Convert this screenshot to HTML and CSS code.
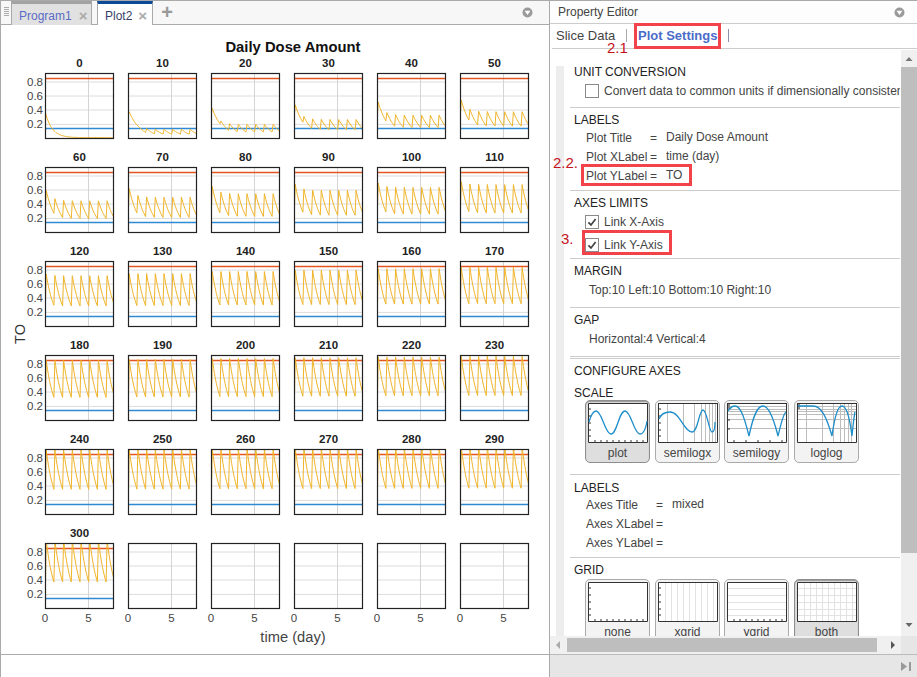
FILE: index.html
```html
<!DOCTYPE html>
<html lang="en">
<head>
<meta charset="utf-8">
<title>Plot settings</title>
<link rel="stylesheet" href="styles.css">
</head>
<body>
<div class="app">
  <main class="left">
    <div class="tabbar">
      <div class="grip"></div>
      <div class="tab tab-off"><span class="tab-name">Program1</span><span class="tab-x">×</span></div>
      <div class="tab tab-on"><span class="tab-name">Plot2</span><span class="tab-x">×</span></div>
      <div class="tab-add">+</div>
      <svg class="collapse collapse-left" viewBox="0 0 11 11"><circle cx="5.5" cy="5.5" r="5" fill="#9a9a9a"/><path d="M2.6 3.8h5.8L5.5 8z" fill="#fff"/></svg>
    </div>
    <div class="figure">
      <div class="fig-title">Daily Dose Amount</div>
      <div class="fig-body">
        <div class="ylabel"><span>TO</span></div>
        <div class="plots" id="plots"></div>
      </div>
      <div class="xlabel">time (day)</div>
    </div>
    <div class="statusbar"></div>
  </main>

  <aside class="right">
    <header class="prop-head">
      <span>Property Editor</span>
      <svg class="collapse" viewBox="0 0 11 11"><circle cx="5.5" cy="5.5" r="5" fill="#9a9a9a"/><path d="M2.6 3.8h5.8L5.5 8z" fill="#fff"/></svg>
    </header>
    <nav class="prop-tabs">
      <span class="pt pt-slice">Slice Data</span>
      <span class="pt-div pt-div1"></span>
      <span class="pt pt-active">Plot Settings</span>
      <span class="pt-div pt-div2"></span>
    </nav>

    <div class="scroller">
      <div class="viewport">
        <div class="strip"></div>
        <div class="content">
          <section class="sec sec-first">
            <h3>UNIT CONVERSION</h3>
            <div class="check-row"><span class="cb"></span><span class="nowrap">Convert data to common units if dimensionally consistent</span></div>
          </section>
          <section class="sec sec-kv">
            <h3>LABELS</h3>
            <div class="kv"><span class="k">Plot Title</span><span class="eq">=</span><span class="v">Daily Dose Amount</span></div>
            <div class="kv"><span class="k">Plot XLabel</span><span class="eq">=</span><span class="v">time (day)</span></div>
            <div class="kv"><span class="k">Plot YLabel</span><span class="eq">=</span><span class="v">TO</span></div>
          </section>
          <section class="sec">
            <h3>AXES LIMITS</h3>
            <div class="check-row"><span class="cb"><svg viewBox="0 0 14 14"><path d="M2.8 7.4l3 3 5.4-7" fill="none" stroke="#444" stroke-width="2"/></svg></span><span>Link X-Axis</span></div>
            <div class="check-row check-row2"><span class="cb"><svg viewBox="0 0 14 14"><path d="M2.8 7.4l3 3 5.4-7" fill="none" stroke="#444" stroke-width="2"/></svg></span><span>Link Y-Axis</span></div>
          </section>
          <section class="sec sec-text">
            <h3>MARGIN</h3>
            <div class="text-row">Top:10 Left:10 Bottom:10 Right:10</div>
          </section>
          <section class="sec sec-text">
            <h3>GAP</h3>
            <div class="text-row">Horizontal:4 Vertical:4</div>
          </section>
          <section class="sec sec-double">
            <h3>CONFIGURE AXES</h3>
            <h3 class="h-scale">SCALE</h3>
            <div class="icons icons-scale">
              <div class="ibtn ibtn-on">
                <svg viewBox="0 0 60 40"><g class="tk"><path d="M1 6h2M1 13h2M1 20h2M1 27h2M1 33h2M7 39v-2M13 39v-2M19 39v-2M25 39v-2M31 39v-2M37 39v-2M43 39v-2M49 39v-2M55 39v-2"/></g><path class="frame" d="M.5.5h59v39H.5z"/><path class="cv" d="M1 19C3 12 5 8 8 8c6 0 9 23 15 23 6 0 8-23 14-23s9 23 15 23c4 0 6-6 7-13"/></svg>
                <span>plot</span>
              </div>
              <div class="ibtn">
                <svg viewBox="0 0 60 40"><g class="gl"><path d="M9.500 0v40M25.500 0v40M36.500 0v40M43.500 0v40M47.500 0v40M51.500 0v40M54.500 0v40M57.500 0v40"/></g><g class="tk"><path d="M1 6h2M1 13h2M1 20h2M1 27h2M1 33h2"/></g><path class="frame" d="M.5 0v39.5h59V0M0 .5h60"/><path class="cv" d="M1 16C3 11 7 9 12 9c10 0 14 20 22 20 6 0 7-22 11-22 4 0 6 22 9 22 2 0 3-5 3-10"/></svg>
                <span>semilogx</span>
              </div>
              <div class="ibtn">
                <svg viewBox="0 0 60 40"><g class="gl"><path d="M0 3.500h60M0 6.500h60M0 8.500h60M0 11.500h60M0 16.500h60M0 25.500h60"/></g><rect x="0" y="0" width="3" height="6" fill="#888"/><g class="tk"><path d="M1 17h2M1 26h2M7 39v-2M19 39v-2M31 39v-2M43 39v-2M55 39v-2"/></g><path class="frame" d="M.5 0v39.5h59V0M0 .5h60"/><path class="cv" d="M1 8C3 5 5 3 8 3c6 0 10 14 14 30C26 14 30 3 36 3s11 14 15 30c3-12 5-22 8-24"/></svg>
                <span>semilogy</span>
              </div>
              <div class="ibtn">
                <svg viewBox="0 0 60 40"><g class="gl"><path d="M0 3.500h60M0 6.500h60M0 8.500h60M0 11.500h60M0 16.500h60M0 25.500h60M9.500 0v40M25.500 0v40M36.500 0v40M43.500 0v40M47.500 0v40M51.500 0v40M54.500 0v40"/></g><rect x="0" y="0" width="3" height="6" fill="#888"/><path class="frame" d="M.5 0v39.5h59V0M0 .5h60"/><path class="cv" d="M1 3h15C25 3 30 16 35 33 37 18 40 3 45 3c5 0 8 14 10 30 1-10 2-20 3-24"/></svg>
                <span>loglog</span>
              </div>
            </div>
          </section>
          <section class="sec sec-axes">
            <h3>LABELS</h3>
            <div class="kv kv-axes"><span class="k">Axes Title</span><span class="eq">=</span><span class="v">mixed</span></div>
            <div class="kv kv-axes"><span class="k">Axes XLabel</span><span class="eq">=</span></div>
            <div class="kv kv-axes"><span class="k">Axes YLabel</span><span class="eq">=</span></div>
          </section>
          <section class="sec">
            <h3>GRID</h3>
            <div class="icons icons-grid">
              <div class="ibtn">
                <svg viewBox="0 0 60 40"><g class="tk"><path d="M1 6h2M1 13h2M1 20h2M1 27h2M1 33h2M7 39v-2M13 39v-2M19 39v-2M25 39v-2M31 39v-2M37 39v-2M43 39v-2M49 39v-2M55 39v-2"/></g><path class="frame" d="M.5.5h59v39H.5z"/></svg>
                <span>none</span>
              </div>
              <div class="ibtn">
                <svg viewBox="0 0 60 40"><g class="gl2"><path d="M7.500 0v40M13.500 0v40M19.500 0v40M25.500 0v40M31.500 0v40M37.500 0v40M43.500 0v40M49.500 0v40M55.500 0v40"/></g><g class="tk"><path d="M1 6h2M1 13h2M1 20h2M1 27h2M1 33h2"/></g><path class="frame" d="M.5.5h59v39H.5z"/></svg>
                <span>xgrid</span>
              </div>
              <div class="ibtn">
                <svg viewBox="0 0 60 40"><g class="gl2"><path d="M0 6.500h60M0 13.500h60M0 20.500h60M0 27.500h60M0 33.500h60"/></g><g class="tk"><path d="M7 39v-2M13 39v-2M19 39v-2M25 39v-2M31 39v-2M37 39v-2M43 39v-2M49 39v-2M55 39v-2"/></g><path class="frame" d="M.5.5h59v39H.5z"/></svg>
                <span>ygrid</span>
              </div>
              <div class="ibtn ibtn-on">
                <svg viewBox="0 0 60 40"><g class="gl2"><path d="M7.500 0v40M13.500 0v40M19.500 0v40M25.500 0v40M31.500 0v40M37.500 0v40M43.500 0v40M49.500 0v40M55.500 0v40M0 6.500h60M0 13.500h60M0 20.500h60M0 27.500h60M0 33.500h60"/></g><path class="frame" d="M.5.5h59v39H.5z"/></svg>
                <span>both</span>
              </div>
            </div>
          </section>
        </div>
      </div>
      <div class="vbar">
        <svg class="arrow" viewBox="0 0 16 17"><path d="M4.500 11l3.500-4 3.500 4z" fill="#777"/></svg>
        <div class="vthumb"></div>
        <svg class="arrow arrow-down" viewBox="0 0 16 17"><path d="M4.500 6l3.500 4 3.500-4z" fill="#666"/></svg>
      </div>
      <div class="hbar">
        <svg class="harrow" viewBox="0 0 17 18"><path d="M10 5l-4 4 4 4z" fill="#aaa"/></svg>
        <div class="hthumb"></div>
        <svg class="harrow harrow-r" viewBox="0 0 17 18"><path d="M7 5l4 4-4 4z" fill="#555"/></svg>
      </div>
      <div class="corner"></div>
    </div>
    <footer class="prop-foot">
      <svg viewBox="0 0 12 11"><path d="M1 1l6 4.500-6 4.500z" fill="#999"/><rect x="9" y="1" width="2" height="9" fill="#999"/></svg>
    </footer>

    <div class="mark mark-tab"></div>
    <div class="mark mark-y"></div>
    <div class="mark mark-link"></div>
    <span class="note note-21">2.1</span>
    <span class="note note-22">2.2.</span>
    <span class="note note-3">3.</span>
  </aside>
</div>
<script src="plots.js"></script>
</body>
</html>
```

FILE: styles.css
```css
* { box-sizing: border-box; }
html, body { margin: 0; padding: 0; }
body {
  width: 917px;
  height: 677px;
  overflow: hidden;
  background: #fff;
  font-family: "Liberation Sans", Arial, sans-serif;
  font-size: 12px;
  color: #444;
}
.app { display: flex; width: 917px; height: 677px; }

/* left */
.left {
  width: 549px;
  flex: none;
  display: flex;
  flex-direction: column;
  border-left: 1px solid #aaa;
  border-top: 1px solid #aaa;
}
.tabbar {
  height: 24px;
  flex: none;
  display: flex;
  align-items: stretch;
  background: #f7f7f7;
  border-bottom: 1px solid #aaa;
  position: relative;
}
.grip {
  width: 5px;
  margin: 6px 2px 8px 3px;
  background: repeating-linear-gradient(#aaa 0 1px, transparent 1px 2px);
}
.tab {
  display: flex;
  align-items: center;
  height: 24px;
  border-right: 1px solid #aaa;
  font-size: 12px;
}
.tab-off {
  width: 81px;
  padding: 2px 0 0 7px;
  background: #e1e1e1;
  border-left: 1px solid #aaa;
  border-top: 3px solid #a3a3a3;
  color: #5b6bc4;
  gap: 7px;
}
.tab-on {
  width: 56px;
  margin-left: 5px;
  padding: 2px 0 0 7px;
  background: #fff;
  border-left: 1px solid #aaa;
  border-top: 3px solid #0b4a98;
  color: #3a3f6a;
  gap: 6px;
}
.tab-x { color: #aaa; font-size: 15px; font-weight: bold; line-height: 1; }
.tab-add {
  margin-left: 7px;
  width: 14px;
  text-align: center;
  color: #999;
  font-size: 20px;
  line-height: 23px;
  font-weight: bold;
}
.collapse { width: 11px; height: 11px; flex: none; }
.collapse-left { position: absolute; left: 521px; top: 6px; }

.figure { flex: 1; display: flex; flex-direction: column; background: #fff; min-height: 0; }
.fig-title {
  margin-top: 14px;
  height: 16px;
  line-height: 16px;
  padding-left: 36px;
  text-align: center;
  font-size: 14.8px;
  font-weight: bold;
  color: #111;
}
.fig-body { display: flex; margin-top: 2px; }
.ylabel {
  width: 44px;
  flex: none;
  display: flex;
  align-items: center;
  justify-content: flex-start;
  padding: 2px 0 0 11px;
  height: 552px;
}
.ylabel span {
  writing-mode: vertical-rl;
  transform: rotate(180deg);
  font-size: 14.5px;
  color: #333;
  line-height: 16px;
}
.plots {
  display: grid;
  grid-template-columns: repeat(6, 69px);
  grid-auto-rows: 82px;
  column-gap: 14px;
  row-gap: 12px;
}
.cell { display: flex; flex-direction: column; }
.cell-title {
  height: 16px;
  line-height: 13px;
  text-align: center;
  font-size: 11.5px;
  font-weight: bold;
  color: #222;
}
.plot { display: block; overflow: visible; }
.plot text { font-family: "Liberation Sans", Arial, sans-serif; font-size: 11.5px; fill: #444; }
.xlabel {
  margin-top: 20px;
  height: 16px;
  line-height: 16px;
  padding-left: 36px;
  text-align: center;
  font-size: 14.7px;
  color: #444;
}
.statusbar { margin-top: auto; height: 23px; flex: none; border-top: 1px solid #aaa; background: #fff; }

/* right */
.right {
  position: relative;
  flex: 1;
  min-width: 0;
  display: flex;
  flex-direction: column;
  border-left: 1px solid #aaa;
  border-top: 1px solid #aaa;
  background: #fff;
}
.prop-head {
  height: 23px;
  flex: none;
  display: flex;
  align-items: center;
  justify-content: space-between;
  padding: 0 12px 0 8px;
  border-bottom: 1px solid #ccc;
  color: #444;
  background: #fdfdfd;
}
.prop-tabs {
  height: 25px;
  flex: none;
  display: flex;
  align-items: center;
  margin-left: 2px;
  border-bottom: 1px solid #ccc;
  padding: 0 0 2px 4px;
  font-size: 13px;
}
.pt-slice { color: #444; width: 70px; }
.pt-active { color: #4a6cc9; font-weight: bold; width: 101px; padding-left: 11px; }
.pt-div { width: 1px; height: 13px; background: #999; flex: none; }
.pt-div1 { background: #aaa; }
.pt-div2 { background: #8a8fb0; }

.scroller {
  flex: none;
  height: 604px;
  display: grid;
  grid-template-columns: 351px 16px;
  grid-template-rows: 586px 18px;
  margin-top: 1px;
}
.viewport { position: relative; overflow: hidden; background: #fff; }
.strip { position: absolute; left: 6px; top: 16px; bottom: 0; width: 8px; background: #ededed; }
.content { margin-left: 20px; width: 330px; overflow: hidden; padding-top: 14px; }
.sec { border-top: 1px solid #ccc; padding: 4px 0 4px 4px; }
.sec-first { border-top: 0; padding-top: 0; padding-bottom: 7px; }
.sec-kv .kv:first-of-type { margin-top: 1px; }
.sec-text { padding-bottom: 8px; }
.sec-double { border-top: 3px double #ccc; padding-top: 4px; padding-bottom: 11px; }
.sec-axes { padding-top: 5px; }
h3 { margin: 0; font-weight: normal; font-size: 12px; line-height: 16px; height: 16px; color: #222; }
.h-scale { margin-top: 6px; }
.check-row { display: flex; align-items: center; height: 18px; margin-top: 2px; padding-left: 11px; gap: 5px; white-space: nowrap; }
.check-row2 { margin-top: 4px; height: 19px; }
.nowrap { white-space: nowrap; }
.cb { width: 14px; height: 14px; flex: none; border: 1px solid #8a8a8a; background: #fff; display: block; }
.cb svg { display: block; width: 12px; height: 12px; }
.kv { display: flex; height: 19px; line-height: 19px; padding-left: 12px; }
.k { width: 64px; flex: none; }
.eq { width: 16px; flex: none; }
.v { position: relative; top: -1px; }
.kv-axes .k { width: 70px; }
.kv-axes .eq { width: 16px; }
.text-row { height: 18px; margin-top: 2px; line-height: 18px; padding-left: 15px; }
.icons { display: flex; margin: 0 0 0 11px; }
.icons-scale { margin-top: -1px; }
.icons-grid { margin-top: 1px; }
.ibtn {
  width: 65px;
  height: 63px;
  flex: none;
  margin-right: 4px;
  border: 1px solid #aaa;
  border-radius: 5px;
  background: #f3f3f3;
  display: flex;
  flex-direction: column;
  align-items: center;
  overflow: hidden;
}
.ibtn:first-child { margin-right: 5px; }
.ibtn:nth-child(3) { margin-right: 5px; }
.ibtn svg { width: 60px; height: 40px; flex: none; margin-top: 2px; background: #fff; display: block; }
.ibtn span { line-height: 20px; font-size: 12px; color: #444; }
.ibtn-on { background: #dedede; border-color: #8e8e8e; box-shadow: inset 0 1px 1px #999; }
.frame { fill: none; stroke: #333; stroke-width: 1; }
.cv { fill: none; stroke: #1f8fc9; stroke-width: 1.3; }
.tk path { stroke: #333; stroke-width: 1; fill: none; }
.gl path { stroke: #bdbdbd; stroke-width: 1; fill: none; }
.gl2 path { stroke: #e2e2e2; stroke-width: 1; fill: none; }

.vbar { background: #f0f0f0; display: flex; flex-direction: column; }
.arrow { width: 16px; height: 17px; flex: none; }
.vthumb { width: 16px; height: 486px; background: #bebebe; flex: none; }
.arrow-down { margin-top: auto; margin-bottom: 2px; }
.hbar { background: #f0f0f0; display: flex; align-items: center; }
.harrow { width: 17px; height: 18px; flex: none; }
.hthumb { width: 310px; height: 14px; margin-top: -1px; background: #bebebe; flex: none; }
.harrow-r { margin-left: 7px; }
.corner { background: #e6e6e6; }
.prop-foot {
  flex: none;
  height: 23px;
  background: #e6e6e6;
  border-top: 1px solid #bbb;
  display: flex;
  align-items: center;
  justify-content: flex-end;
  padding-right: 5px;
}
.prop-foot svg { width: 12px; height: 11px; }

/* annotations lying over the panel */
.mark { position: absolute; border: 3px solid #f3434a; }
.mark-tab { left: 84px; top: 22px; width: 87px; height: 26px; }
.mark-y { left: 31px; top: 163px; width: 111px; height: 22px; }
.mark-link { left: 32px; top: 229px; width: 90px; height: 25px; }
.note { position: absolute; color: #c4141e; font-size: 15px; line-height: 16px; }
.note-21 { left: 57px; top: 39px; }
.note-22 { left: 3px; top: 154px; }
.note-3 { left: 11px; top: 230px; }
```

FILE: plots.js
```js
(function () {
  var NS = "http://www.w3.org/2000/svg";
  var W = 69, H = 66;
  var GRID_Y = [[0.8, 9], [0.6, 23], [0.4, 37], [0.2, 51.4]];

  var peakTable = [[0, 0], [10, .13], [20, .2], [30, .27], [40, .33], [50, .38], [60, .45], [70, .5], [80, .55], [90, .6], [100, .64], [110, .68], [120, .72], [140, .78], [170, .84], [200, .88], [230, .91], [300, .97]];
  var troughTable = [[0, 0], [10, .06], [20, .09], [30, .12], [40, .15], [50, .17], [60, .19], [100, .25], [120, .28], [170, .31], [230, .34], [300, .36]];

  function lerp(table, d) {
    for (var i = 1; i < table.length; i++) {
      if (d <= table[i][0]) {
        var a = table[i - 1], b = table[i];
        return a[1] + (b[1] - a[1]) * (d - a[0]) / (b[0] - a[0]);
      }
    }
    return table[table.length - 1][1];
  }
  function px(t) { return 0.5 + t * 8.7; }
  function py(v) { return 51.4 - (v - 0.2) * 70.5; }

  function curve(d) {
    var pts = [[0, 0.35]];
    var t;
    if (d === 0) {
      for (t = 0; t <= 8; t += 0.1) pts.push([t, 0.35 * Math.exp(-1.3 * t) + 0.012]);
    } else {
      var P = lerp(peakTable, d), T = lerp(troughTable, d);
      var ex = Math.max(0, 0.27 * (1 - d / 130));
      for (var n = 0; n < 8; n++) {
        var k = Math.exp(-1.6 * n);
        var pk = P + ex * k;
        var tr = T + 0.5 * ex * k;
        for (t = 0.08; t <= 1; t += 0.08) {
          var f = (t - 0.08) / 0.92;
          pts.push([n + t, pk * Math.pow(tr / pk, f)]);
        }
      }
    }
    return pts.map(function (p, i) {
      return (i ? "L" : "M") + px(p[0]).toFixed(1) + " " + py(p[1]).toFixed(1);
    }).join("");
  }

  function el(name, attrs, parent, text) {
    var e = document.createElementNS(NS, name);
    for (var k in attrs) e.setAttribute(k, attrs[k]);
    if (text !== undefined) e.textContent = text;
    parent.appendChild(e);
    return e;
  }

  var root = document.getElementById("plots");
  for (var i = 0; i < 36; i++) {
    var dose = i * 10;
    var hasData = dose <= 300;
    var cell = document.createElement("div");
    cell.className = "cell";
    var title = document.createElement("div");
    title.className = "cell-title";
    title.textContent = hasData ? String(dose) : "\u00a0";
    cell.appendChild(title);

    var svg = el("svg", { class: "plot", width: W, height: H, viewBox: "0 0 " + W + " " + H }, cell);
    var inner = el("svg", { x: 0, y: 0, width: W, height: H, viewBox: "0 0 " + W + " " + H }, svg);
    el("rect", { x: 0, y: 0, width: W, height: H, fill: "#fff" }, inner);
    GRID_Y.forEach(function (g) {
      el("line", { x1: 0, x2: W, y1: g[1], y2: g[1], stroke: "#dcdcdc", "stroke-width": 1 }, inner);
    });
    el("line", { x1: 43.5, x2: 43.5, y1: 0, y2: H, stroke: "#d4d4d4", "stroke-width": 1 }, inner);
    if (hasData) {
      el("line", { x1: 0, x2: W, y1: 5.5, y2: 5.5, stroke: "#e4561f", "stroke-width": 1.6 }, inner);
      el("line", { x1: 0, x2: W, y1: 55.5, y2: 55.5, stroke: "#2f8ad4", "stroke-width": 1.6 }, inner);
      el("path", { d: curve(dose), fill: "none", stroke: "#f0b429", "stroke-width": 1 }, inner);
    }
    el("rect", { x: 0.5, y: 0.5, width: W - 1, height: H - 1, fill: "none", stroke: "#222", "stroke-width": 1.2 }, svg);

    if (i % 6 === 0 && hasData) {
      GRID_Y.forEach(function (g) {
        el("text", { x: -2, y: g[1] + 4, "text-anchor": "end" }, svg, g[0].toFixed(1));
      });
    }
    if (i >= 30) {
      el("text", { x: 0, y: H + 13, "text-anchor": "middle" }, svg, "0");
      el("text", { x: 43.5, y: H + 13, "text-anchor": "middle" }, svg, "5");
    }
    root.appendChild(cell);
  }
})();
```
